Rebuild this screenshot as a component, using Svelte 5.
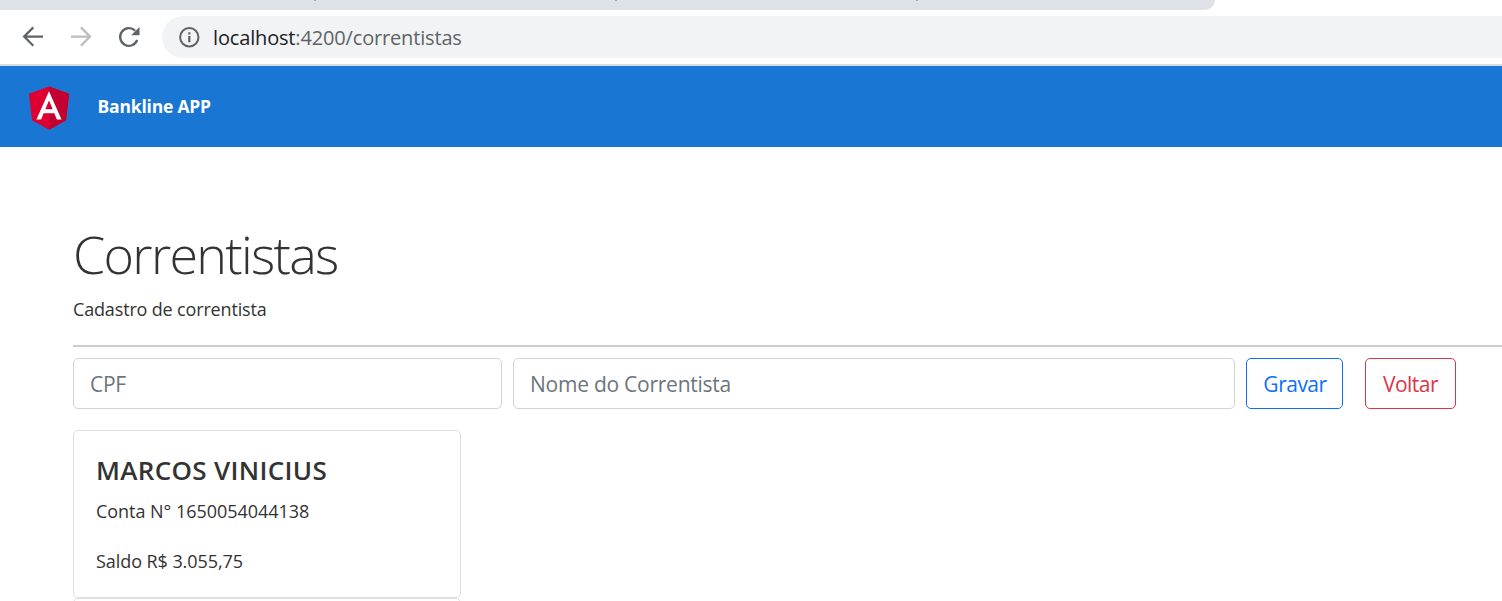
<script>
  const accounts = [{ name: 'MARCOS VINICIUS', number: '1650054044138', balance: '3.055,75' }];
  let cpf = $state('');
  let holder = $state('');
</script>

<div class="window">
  <div class="tabs"><div class="inactive"><i></i><i></i><i></i></div></div>
  <div class="toolbar">
    <svg class="back" width="22" height="22" viewBox="0 0 22 22" fill="none" stroke="#5f6368" stroke-width="2.2"><path d="M21 10.6H2.5M11.3 1.4L2.1 10.6l9.2 9.2" /></svg>
    <svg class="forward" width="22" height="22" viewBox="0 0 22 22" fill="none" stroke="#babcbe" stroke-width="2.2"><path d="M0 10.6h18.5M9.9 1.4l9.2 9.2-9.2 9.2" /></svg>
    <svg class="reload" width="22" height="22" viewBox="0 0 22 22"><path d="M19.2 14A8.8 8.8 0 1 1 17.2 4.8" fill="none" stroke="#5f6368" stroke-width="2.3" /><path d="M21.5 1v8.3h-8.3z" fill="#5f6368" /></svg>
    <div class="address">
      <svg width="22" height="22" viewBox="0 0 22 22"><circle cx="11.3" cy="11.3" r="9.2" fill="none" stroke="#5f6368" stroke-width="2" /><path d="M10.2 10h2.2v6.3h-2.2zM10.2 6.2h2.2v2.2h-2.2z" fill="#5f6368" /></svg>
      <span class="url"><b>localhost</b>:4200/correntistas</span>
    </div>
  </div>

  <header>
    <svg width="54" height="54" viewBox="0 0 250 250">
      <path fill="#dd0031" d="M125 30L31.9 63.2l14.2 123.1L125 230l78.9-43.7 14.2-123.1z" />
      <path fill="#c3002f" d="M125 30v22.2-.1V230l78.9-43.7 14.2-123.1L125 30z" />
      <path fill="#fff" d="M125 52.1L66.8 182.6h21.7l11.7-29.2h49.4l11.7 29.2H183L125 52.1zm17 83.3h-34l17-40.9 17 40.9z" />
    </svg>
    <span class="brand">Bankline APP</span>
  </header>

  <main>
    <h1>Correntistas</h1>
    <p class="lead">Cadastro de correntista</p>
    <hr />
    <form>
      <input class="cpf" placeholder="CPF" bind:value={cpf} />
      <input class="holder" placeholder="Nome do Correntista" bind:value={holder} />
      <button type="button" class="save">Gravar</button>
      <button type="button" class="return">Voltar</button>
    </form>
    {#each accounts as a}
      <article>
        <h2>{a.name}</h2>
        <p class="conta">Conta N° {a.number}</p>
        <p class="saldo">Saldo R$ {a.balance}</p>
      </article>
    {/each}
    <article class="next"></article>
  </main>
</div>

<style>
  :global(body) { background: #fff; overflow: hidden; }
  .window { width: 1502px; height: 601px; overflow: hidden; font-family: "Open Sans", "Noto Sans", sans-serif; color: #333; box-sizing: border-box; }
  .window * { box-sizing: border-box; }
  .tabs { height: 10px; }
  .inactive { width: 1215px; height: 10px; background: #dee1e5; border-radius: 0 0 10px 0; display: flex; padding-left: 314px; gap: 299px; }
  .inactive i { width: 2px; height: 1px; background: #a0a3a7; }
  .toolbar { height: 56px; border-bottom: 2px solid #dadce0; display: flex; align-items: center; padding-left: 22px; }
  .toolbar svg { flex: none; }
  .forward { margin-left: 27px; }
  .reload { margin-left: 25px; }
  .address { margin-left: 22px; flex: 1; height: 42px; background: #f1f3f4; border-radius: 21px 0 0 21px; display: flex; align-items: center; padding-left: 16px; }
  .back, .forward, .reload { margin-bottom: 1px; }
  .url { margin: 2px 0 0 13px; font-size: 20px; line-height: 28px; color: #5f6368; white-space: nowrap; letter-spacing: -.16px; }
  .url b { font-weight: 400; color: #202124; }
  header { height: 81px; background: #1976d2; display: flex; align-items: center; padding-left: 22px; color: #fff; }
  .brand { margin: -2px 0 0 21.5px; font-size: 17.5px; font-weight: 700; line-height: 24px; white-space: nowrap; letter-spacing: -.2px; }
  main { padding: 72px 0 0 73px; }
  h1 { margin: 0; height: 70px; line-height: 70px; font-size: 52px; font-weight: 300; white-space: nowrap; letter-spacing: -1.7px; }
  p { margin: 0; line-height: 27px; font-size: 18px; white-space: nowrap; }
  .lead { margin-top: 7px; letter-spacing: -.16px; }
  hr { border: 0; margin: 22px 0 0; height: 2px; background: #ccc; }
  form { display: flex; margin-top: 11px; height: 51px; }
  input, button { font-family: inherit; font-size: 21px; height: 51px; border-radius: 5px; background: #fff; letter-spacing: -.3px; }
  input { border: 1px solid #ced4da; padding: 0 16px; color: #212529; }
  input::placeholder { color: #6c757d; opacity: 1; letter-spacing: -.25px; }
  .cpf { width: 429px; }
  .holder { width: 722px; margin-left: 11px; }
  button { padding: 0; white-space: nowrap; letter-spacing: -.5px; }
  .save { width: 97px; margin-left: 11px; padding-left: 1px; border: 1px solid #0d6efd; color: #0d6efd; }
  .return { width: 91px; margin-left: 22px; border: 1px solid #dc3545; color: #dc3545; }
  article { width: 388px; height: 168px; border: 1px solid #dfdfdf; border-radius: 5px; margin-top: 21px; padding: 22px; }
  article.next { margin-top: 0; }
  h2 { margin: 0; font-size: 26px; line-height: 34px; font-weight: 600; white-space: nowrap; letter-spacing: .32px; }
  .conta { margin-top: 11px; letter-spacing: -.04px; }
  .saldo { margin-top: 23px; letter-spacing: -.07px; }
</style>
